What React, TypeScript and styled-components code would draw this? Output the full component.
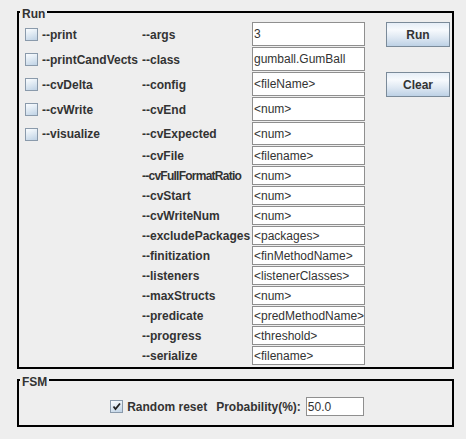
import React from "react";
import styled, { createGlobalStyle } from "styled-components";

const GlobalStyle = createGlobalStyle`
  html, body {
    margin: 0;
    padding: 0;
    background: #eeeeee;
  }
  body {
    font-family: "Liberation Sans", Arial, sans-serif;
    font-size: 12px;
    color: #333333;
  }
`;

const Page = styled.div`
  width: 466px;
  height: 439px;
  box-sizing: border-box;
  padding: 3px 12px 0 17px;
  background: #eeeeee;
  display: flex;
  flex-direction: column;
  gap: 2px;
`;

const Group = styled.fieldset`
  margin: 0;
  padding: 0;
  min-width: 0;
  width: 437px;
  box-sizing: border-box;
  border: 2px solid #000000;
`;

const Title = styled.legend`
  margin-left: 1px;
  padding: 4px 2px 0 2px;
  font: bold 12px/14px "Liberation Sans", Arial, sans-serif;
  color: #333333;
`;

const RunGrid = styled.div`
  display: grid;
  grid-template-columns: 118px 110px 134px 64px;
  grid-template-rows: repeat(4, 25px) 24px repeat(11, 20px);
  padding: 1px 0 1px 5px;
`;

const Cell = styled.div<{ $col: number; $row: number }>`
  grid-column: ${(p) => p.$col};
  grid-row: ${(p) => p.$row};
  display: flex;
  align-items: center;
  min-width: 0;
  overflow: hidden;
`;

const FieldCell = styled.div<{ $row: number }>`
  grid-column: 3;
  grid-row: ${(p) => p.$row};
  display: flex;
  align-items: flex-start;
`;

const Label = styled.span<{ $tight?: boolean }>`
  font: bold 12px/14px "Liberation Sans", Arial, sans-serif;
  letter-spacing: ${(p) => (p.$tight ? "-0.75px" : "0")};
  color: #333333;
  white-space: nowrap;
`;

const Check = styled.label`
  display: flex;
  align-items: center;
  gap: 4px;
  white-space: nowrap;
`;

const Box = styled.span`
  width: 13px;
  height: 13px;
  margin-left: 1px;
  box-sizing: border-box;
  border: 1px solid #8a9aab;
  background: linear-gradient(160deg, #fbfdff 0%, #dde8f2 50%, #bfd2e5 100%);
  display: flex;
  align-items: center;
  justify-content: center;
  flex: none;
`;

const Field = styled.div<{ $w?: number }>`
  width: ${(p) => p.$w ?? 113}px;
  height: calc(100% - 1px);
  box-sizing: border-box;
  border: 1px solid #8f8f8f;
  background: #ffffff;
  padding-left: 1px;
  display: flex;
  align-items: center;
  overflow: hidden;
  white-space: nowrap;
  font: 12px/14px "Liberation Sans", Arial, sans-serif;
  color: #333333;
`;

const ButtonCell = styled.div<{ $row: number }>`
  grid-column: 4;
  grid-row: ${(p) => p.$row};
  display: flex;
`;

const Button = styled.button`
  width: 64px;
  height: 25px;
  margin: 0;
  padding: 0;
  box-sizing: border-box;
  border: 1px solid #7a8a99;
  background: linear-gradient(to bottom, #e6eef7 0%, #f7fafd 30%, #dde7f2 65%, #bdd1e5 100%);
  font: bold 12px/14px "Liberation Sans", Arial, sans-serif;
  color: #333333;
`;

const FsmRow = styled.div`
  display: flex;
  align-items: center;
  justify-content: center;
  height: 19px;
  padding: 8px 0 9px 2px;
`;

const Spacer = styled.span<{ $w: number }>`
  width: ${(p) => p.$w}px;
  flex: none;
`;

const FsmField = styled(Field)`
  height: 19px;
`;

const CheckMark = () => (
  <svg width="9" height="9" viewBox="0 0 9 9">
    <path d="M1.5 4.5 L3.5 7 L8 1.5" fill="none" stroke="#222" strokeWidth="1.8" />
  </svg>
);

const checks = ["--print", "--printCandVects", "--cvDelta", "--cvWrite", "--visualize"];

const options: [string, string][] = [
  ["--args", "3"],
  ["--class", "gumball.GumBall"],
  ["--config", "<fileName>"],
  ["--cvEnd", "<num>"],
  ["--cvExpected", "<num>"],
  ["--cvFile", "<filename>"],
  ["--cvFullFormatRatio", "<num>"],
  ["--cvStart", "<num>"],
  ["--cvWriteNum", "<num>"],
  ["--excludePackages", "<packages>"],
  ["--finitization", "<finMethodName>"],
  ["--listeners", "<listenerClasses>"],
  ["--maxStructs", "<num>"],
  ["--predicate", "<predMethodName>"],
  ["--progress", "<threshold>"],
  ["--serialize", "<filename>"],
];

export default function App() {
  return (
    <>
      <GlobalStyle />
      <Page>
        <Group>
          <Title>Run</Title>
          <RunGrid>
            {checks.map((c, i) => (
              <Cell key={c} $col={1} $row={i + 1}>
                <Check>
                  <Box />
                  <Label>{c}</Label>
                </Check>
              </Cell>
            ))}
            {options.map(([name, value], i) => (
              <React.Fragment key={name}>
                <Cell $col={2} $row={i + 1}>
                  <Label $tight={name.length > 18}>{name}</Label>
                </Cell>
                <FieldCell $row={i + 1}>
                  <Field>{value}</Field>
                </FieldCell>
              </React.Fragment>
            ))}
            <ButtonCell $row={1}>
              <Button>Run</Button>
            </ButtonCell>
            <ButtonCell $row={3}>
              <Button>Clear</Button>
            </ButtonCell>
          </RunGrid>
        </Group>
        <Group>
          <Title>FSM</Title>
          <FsmRow>
            <Check>
              <Box>
                <CheckMark />
              </Box>
              <Label>Random reset</Label>
            </Check>
            <Spacer $w={9} />
            <Label>Probability(%):</Label>
            <Spacer $w={5} />
            <FsmField $w={58}>50.0</FsmField>
          </FsmRow>
        </Group>
      </Page>
    </>
  );
}
